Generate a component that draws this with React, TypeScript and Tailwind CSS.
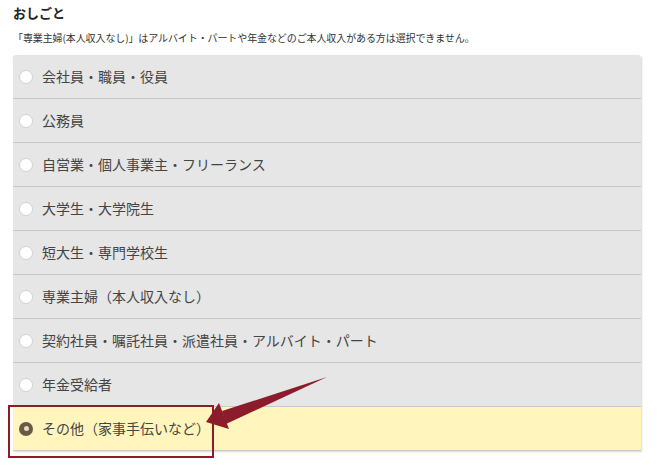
import React from "react";

const items = [
  "会社員・職員・役員",
  "公務員",
  "自営業・個人事業主・フリーランス",
  "大学生・大学院生",
  "短大生・専門学校生",
  "専業主婦（本人収入なし）",
  "契約社員・嘱託社員・派遣社員・アルバイト・パート",
  "年金受給者",
  "その他（家事手伝いなど）",
];

export default function App() {
  return (
    <div
      className="relative w-[658px] h-[470px] bg-white overflow-hidden"
      style={{ fontFamily: '"Noto Sans CJK JP", "Noto Sans", sans-serif' }}
    >
      <div className="pl-[13px] pt-[3px]">
        <div className="text-[13px] font-bold text-[#222] leading-[20px]">おしごと</div>
        <div className="mt-[9px] text-[10px] text-[#333] leading-[12px] tracking-[-0.1px]">
          「専業主婦(本人収入なし)」はアルバイト・パートや年金などのご本人収入がある方は選択できません。
        </div>
      </div>
      <div className="ml-[13px] mt-[11px] w-[628px] rounded-t-[3px] overflow-hidden shadow-[1px_1px_2px_rgba(0,0,0,0.15)]">
        {items.map((t, i) => {
          const selected = i === items.length - 1;
          return (
            <div
              key={t}
              className={`flex items-center h-[44px] border-b border-[#c9c9c9] ${
                selected ? "bg-[#fff5bd]" : "bg-[#e6e6e6]"
              }`}
            >
              {selected ? (
                <div className="ml-[6px] w-[14px] h-[14px] rounded-full bg-[#6a5a44] flex items-center justify-center">
                  <div className="w-[5px] h-[5px] rounded-full bg-[#e8dcc0]" />
                </div>
              ) : (
                <div className="ml-[6px] w-[14px] h-[14px] rounded-full bg-white border border-[#d2d2d2]" />
              )}
              <span className="ml-[9px] text-[14px] text-[#444]">{t}</span>
            </div>
          );
        })}
      </div>
      <div className="absolute left-[8px] top-[405px] w-[206px] h-[53px] border-2 border-[#8c1c2b]" />
      <svg className="absolute left-0 top-0" width="658" height="470">
        <path d="M327 377 L222 411 L226 424 Z" fill="#8c1c2b" />
        <path d="M206 422 L219 403 L229 429 Z" fill="#8c1c2b" />
      </svg>
    </div>
  );
}
